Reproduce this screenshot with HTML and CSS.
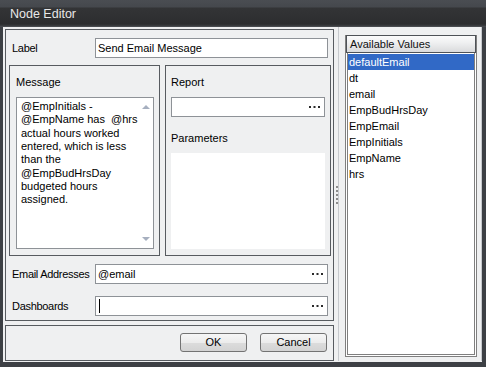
FILE: index.html
```html
<!DOCTYPE html>
<html>
<head>
<meta charset="utf-8">
<title>Node Editor</title>
<link rel="stylesheet" href="styles.css">
</head>
<body>
<div class="window">
  <div class="titlebar"><span class="title">Node Editor</span></div>
  <div class="client">
    <div class="main">
      <div class="panel upper">
        <div class="field-row">
          <span class="lbl">Label</span>
          <div class="input"><span class="val">Send Email Message</span></div>
        </div>
        <div class="groups">
          <div class="group message">
            <div class="glabel">Message</div>
            <div class="textarea">
              <div class="ta-text">@EmpInitials -<br>@EmpName has&nbsp; @hrs<br>actual hours worked<br>entered, which is less<br>than the<br>@EmpBudHrsDay<br>budgeted hours<br>assigned.</div>
              <div class="vscroll"><span class="arrow up"></span><span class="arrow down"></span></div>
            </div>
          </div>
          <div class="group report">
            <div class="glabel">Report</div>
            <div class="input small"><span class="val"></span><svg class="dots" width="11" height="2" viewBox="0 0 11 2"><rect x="0" y="0" width="2" height="2"/><rect x="4.5" y="0" width="2" height="2"/><rect x="9" y="0" width="2" height="2"/></svg></div>
            <div class="glabel params-label">Parameters</div>
            <div class="params"></div>
          </div>
        </div>
        <div class="field-row email-row">
          <span class="lbl">Email Addresses</span>
          <div class="input"><span class="val">@email</span><svg class="dots" width="11" height="2" viewBox="0 0 11 2"><rect x="0" y="0" width="2" height="2"/><rect x="4.5" y="0" width="2" height="2"/><rect x="9" y="0" width="2" height="2"/></svg></div>
        </div>
        <div class="field-row dash-row">
          <span class="lbl">Dashboards</span>
          <div class="input"><span class="val"><span class="caret"></span></span><svg class="dots" width="11" height="2" viewBox="0 0 11 2"><rect x="0" y="0" width="2" height="2"/><rect x="4.5" y="0" width="2" height="2"/><rect x="9" y="0" width="2" height="2"/></svg></div>
        </div>
      </div>
      <div class="panel buttons">
        <button class="btn">OK</button>
        <button class="btn">Cancel</button>
      </div>
    </div>
    <div class="splitter"><span class="grip"></span></div>
    <div class="side">
      <div class="avail">
        <div class="avail-head">Available Values</div>
        <ul class="list">
          <li class="selected">defaultEmail</li>
          <li>dt</li>
          <li>email</li>
          <li>EmpBudHrsDay</li>
          <li>EmpEmail</li>
          <li>EmpInitials</li>
          <li>EmpName</li>
          <li>hrs</li>
        </ul>
      </div>
    </div>
  </div>
</div>
</body>
</html>
```
FILE: styles.css
```css
* { box-sizing: border-box; margin: 0; padding: 0; }
html, body { width: 486px; height: 367px; overflow: hidden; }
body {
  background: #3b3e43;
  font-family: "Liberation Sans", Arial, sans-serif;
  font-size: 11px;
  color: #000;
}
.window {
  width: 486px;
  height: 367px;
  display: flex;
  flex-direction: column;
  background: #3d4045;
}
.titlebar {
  flex: none;
  height: 27px;
  background: linear-gradient(#4a4d52 0, #45484d 7px, #333436 8px, #2c2d2f 24px, #3c3e42 26px, #55585c 27px);
  color: #e8e8e8;
  font-size: 12.5px;
  line-height: 12px;
  padding: 8px 0 0 10px;
}
.client {
  flex: none;
  height: 335px;
  margin: 0 4px 0 3px;
  background: #eff0f1;
  display: flex;
  padding: 2px 0 1px 2px;
}
.main {
  width: 329px;
  display: flex;
  flex-direction: column;
  gap: 4px;
}
.panel { border: 1px solid #575b60; }
.upper {
  height: 292px;
  padding: 8px 1px 0 0;
}
.field-row {
  display: flex;
  align-items: center;
  height: 20px;
  padding-left: 6px;
}
.lbl { width: 83px; flex: none; letter-spacing: -0.3px; white-space: nowrap; }
.input {
  width: 233px;
  height: 20px;
  background: #fff;
  border: 1px solid #8e9297;
  display: flex;
  align-items: center;
  padding: 0 4px 0 2px;
}
.input .val { flex: 1; display: flex; align-items: center; }
.input.small { width: 154px; }
.dots { fill: #2a2a2a; flex: none; }
.caret {
  display: block;
  width: 1px;
  height: 14px;
  background: #000;
  margin-left: 1px;
}
.groups {
  display: flex;
  gap: 5px;
  height: 191px;
  margin: 7px 0 0 3px;
}
.group { border: 1px solid #575b60; }
.message { width: 151px; padding: 0 0 0 6px; }
.report { width: 166px; padding: 0 0 0 5px; }
.glabel {
  line-height: 13px;
  height: 13px;
  margin-top: 10px;
}
.message .textarea, .report .input { margin-top: 8px; }
.textarea {
  width: 138px;
  height: 152px;
  background: #fff;
  border: 1px solid #8e9297;
  display: flex;
}
.ta-text {
  flex: 1;
  padding: 2px 0 0 4px;
  line-height: 13.33px;
  white-space: nowrap;
}
.vscroll {
  width: 17px;
  flex: none;
  display: flex;
  flex-direction: column;
  justify-content: space-between;
  align-items: center;
  padding: 7px 0 7px 0;
}
.arrow {
  width: 0;
  height: 0;
  border-left: 4px solid transparent;
  border-right: 4px solid transparent;
}
.arrow.up { border-bottom: 4px solid #a6afbf; }
.arrow.down { border-top: 4px solid #a6afbf; }
.params-label { margin-top: 15px; }
.params {
  margin-top: 8px;
  width: 154px;
  height: 96px;
  background: #fff;
}
.email-row { margin-top: 8px; }
.dash-row { margin-top: 12px; }
.buttons {
  height: 36px;
  display: flex;
  justify-content: flex-end;
  align-items: flex-start;
  gap: 13px;
  padding: 7px 6px 0 0;
}
.btn {
  width: 67px;
  height: 19px;
  border: 1px solid #737373;
  border-radius: 3px;
  background: linear-gradient(#f6f6f6 0, #ececec 50%, #dcdcdc 51%, #d3d3d3 100%);
  font-family: "Liberation Sans", Arial, sans-serif;
  font-size: 11px;
  color: #000;
  line-height: 17px;
}
.splitter {
  width: 4px;
  flex: none;
  display: flex;
  align-items: center;
}
.grip {
  display: block;
  width: 2px;
  height: 18px;
  margin-left: 2px;
  background: repeating-linear-gradient(to bottom, #8b8b8b 0 2px, transparent 2px 4px);
}
.side {
  width: 144px;
  flex: none;
  margin-top: -2px;
  border-left: 1px solid #c6c9cd;
  border-right: 1px solid #c6c9cd;
  padding: 8px 0 0 6px;
}
.avail {
  width: 132px;
  height: 322px;
  background: #fff;
  border: 1px solid #7f7f7f;
  padding: 1px;
  display: flex;
  flex-direction: column;
}
.avail-head {
  flex: none;
  height: 18px;
  margin: -2px -1px 0 -1px;
  border: 1px solid #4e5257;
  background: linear-gradient(#fbfbfb 0, #eeeff0 45%, #d9dadc 100%);
  line-height: 16px;
  padding-left: 3px;
  color: #111;
}
.list {
  list-style: none;
  flex: 1;
  border: 1px solid #7f7f7f;
  border-top: none;
  padding-top: 1px;
}
.list li {
  height: 16px;
  line-height: 16px;
  padding-left: 1px;
}
.list li.selected {
  background: #3169c6;
  color: #fff;
}
```
